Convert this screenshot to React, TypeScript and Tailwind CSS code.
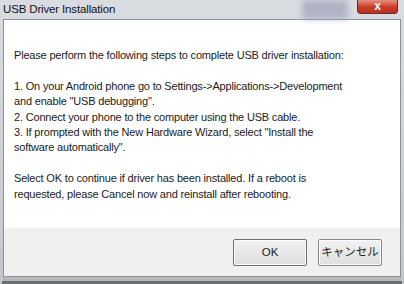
import React from "react";

const LINES = [
  "Please perform the following steps to complete USB driver installation:",
  "",
  "1. On your Android phone go to Settings->Applications->Development",
  "and enable \"USB debugging\".",
  "2. Connect your phone to the computer using the USB cable.",
  "3. If prompted with the New Hardware Wizard, select \"Install the",
  "software automatically\".",
  "",
  "Select OK to continue if driver has been installed. If a reboot is",
  "requested, please Cancel now and reinstall after rebooting.",
];

export default function App() {
  return (
    <div
      className="w-[404px] h-[284px] flex flex-col overflow-hidden bg-gradient-to-b from-[#d9dce0] to-[#c3c7cc] relative"
      style={{ fontFamily: '"Liberation Sans", "Noto Sans CJK JP", sans-serif' }}
    >
      {/* Title bar */}
      <div className="h-[19px] flex items-center pl-[3px] text-[11.5px] tracking-[-0.15px] text-[#111] shrink-0 relative">
        <span className="leading-none pt-[1px]">USB Driver Installation</span>
        {/* blurred backdrop behind glass */}
        <div className="absolute left-[302px] top-0 w-[46px] h-[19px] bg-[#9ea3ba] blur-[3px] opacity-70" />
        {/* close button */}
        <div className="absolute top-0 right-[6px] w-[41px] h-[14px] rounded-b-[4px] border border-t-0 border-[#6b2a22] bg-gradient-to-b from-[#e5907f] via-[#cc3f2c] to-[#b8301e] flex items-center justify-center">
          <span className="text-white text-[12px] font-bold leading-none -mt-[2px]">x</span>
        </div>
      </div>

      {/* Client area */}
      <div className="flex-1 flex flex-col px-[3px]">
        <div className="h-[209px] bg-white border-t border-l border-r border-[#8d9297] pl-[10px] pt-[28px] text-[11px] tracking-[-0.18px] text-[#1b1b1b] leading-[15.4px]">
          {LINES.map((l, i) => (
            <div key={i} className="whitespace-nowrap h-[15.4px]">
              {l}
            </div>
          ))}
        </div>
        <div className="h-[49px] bg-[#f0f0f0] border-l border-r border-b border-[#8d9297] flex items-center justify-end gap-[11px] pr-[18px] pt-[1px]">
          <button className="w-[74px] h-[27px] border border-[#707070] rounded-[2px] bg-gradient-to-b from-[#f2f2f2] to-[#dedede] text-[11.5px] text-[#222] shadow-[inset_0_0_0_1px_#fcfcfc]">
            OK
          </button>
          <button className="w-[64px] h-[27px] border border-[#8a8a8a] rounded-[2px] bg-gradient-to-b from-[#f2f2f2] to-[#dedede] text-[11.5px] text-[#222] shadow-[inset_0_0_0_1px_#fcfcfc]">
            キャンセル
          </button>
        </div>
        <div className="h-[4px] bg-[#b5b9be]" />
      </div>
      <div className="h-[3px] bg-[#6a6d71] mx-[2px]" />
    </div>
  );
}
